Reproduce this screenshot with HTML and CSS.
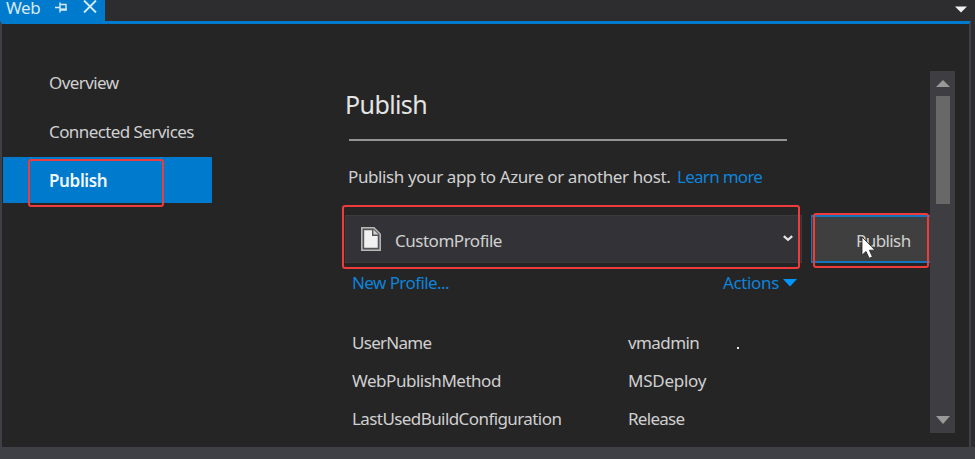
FILE: index.html
```html
<!DOCTYPE html>
<html lang="en">
<head>
<meta charset="utf-8">
<title>Web - Publish</title>
<link rel="stylesheet" href="styles.css">
</head>
<body>
<header class="tabs">
  <div class="tab">
    <span class="tab-name">Web</span>
    <svg class="pin" width="13" height="11" viewBox="0 0 13 11"><path d="M0 5.5H5M5 .5V10.5M5 2.5H11V8.2" fill="none" stroke="#d5eafa" stroke-width="1.4"/><path d="M5 7.6H11.7" stroke="#d5eafa" stroke-width="2.4"/></svg>
    <svg class="close" width="14" height="13" viewBox="0 0 14 13"><path d="M1 .5L13 12.5M13 .5L1 12.5" stroke="#d5eafa" stroke-width="1.9"/></svg>
  </div>
  <svg class="tab-menu" width="12" height="7" viewBox="0 0 12 7"><path d="M0 .5H12L6 6.5Z" fill="#f1f1f1"/></svg>
</header>
<main class="panel">
  <nav class="nav">
    <a class="nav-item"><span class="t-overview">Overview</span></a>
    <a class="nav-item"><span class="t-services">Connected Services</span></a>
    <a class="nav-item active"><span class="t-active">Publish</span><i class="mark mark-nav"></i></a>
  </nav>
  <section class="content">
    <h1><span>Publish</span></h1>
    <p class="intro"><span class="t-intro">Publish your app to Azure or another host.</span><a class="t-learn">Learn more</a></p>
    <div class="profile">
      <div class="combo">
        <svg class="file" width="20" height="24" viewBox="0 0 20 24"><path d="M.8.8H13L19.2 7V23.2H.8Z" fill="#555557" stroke="#b9b9b9" stroke-width="1.5"/><path d="M3.2 3.3H11V9H16.7V20.8H3.2Z" fill="#f1f1f1"/><path d="M12.4 2.5V7.6H17.5Z" fill="#d0d0d0"/></svg>
        <span class="t-profile">CustomProfile</span>
        <svg class="chevron" width="10" height="7" viewBox="0 0 10 7"><path d="M.8 1.2L5 4.9L9.2 1.2" fill="none" stroke="#e4e4e4" stroke-width="2.2"/></svg>
        <i class="mark mark-combo"></i>
      </div>
      <div class="button"><span class="t-button">Publish</span><i class="mark mark-button"></i>
        <svg class="cursor" width="16" height="24" viewBox="0 0 16 24"><path d="M1 1V19.2L5 15.4L8.2 22.3L11.4 20.8L8.4 14.2H14Z" fill="#fff" stroke="#222" stroke-width=".8"/></svg>
      </div>
    </div>
    <div class="links"><a class="t-new">New Profile...</a><a class="actions"><span class="t-actions">Actions</span><svg width="14" height="8" viewBox="0 0 14 8"><path d="M0 0H14L7 7.6Z" fill="#0097fb"/></svg></a></div>
    <dl class="settings">
      <dt><span class="t-user">UserName</span></dt><dd><span class="t-vm">vmadmin</span><i class="dot"></i></dd>
      <dt><span class="t-method">WebPublishMethod</span></dt><dd><span class="t-ms">MSDeploy</span></dd>
      <dt><span class="t-config">LastUsedBuildConfiguration</span></dt><dd><span class="t-release">Release</span></dd>
    </dl>
  </section>
  <aside class="scroll">
    <svg width="14" height="7" viewBox="0 0 14 7"><path d="M0 7L7 0L14 7Z" fill="#999"/></svg>
    <div class="thumb"></div>
    <svg class="down" width="14" height="8" viewBox="0 0 14 8"><path d="M0 0H14L7 8Z" fill="#999"/></svg>
  </aside>
</main>
<footer class="bottom"></footer>
</body>
</html>
```
FILE: styles.css
```css
* { box-sizing: border-box; }
body {
  margin: 0;
  width: 975px;
  height: 459px;
  overflow: hidden;
  display: flex;
  flex-direction: column;
  background: #2d2d30;
  color: #d0d0d0;
  font: 17px/24px "Noto Sans", "Open Sans", sans-serif;
  letter-spacing: -.35px;
  white-space: nowrap;
}
svg { display: block; flex: none; }
.tabs { height: 21px; display: flex; justify-content: space-between; }
.tab { width: 105px; height: 21px; background: #007acc; color: #d5eafa; display: flex; padding-left: 6px; }
.tab-name { width: 49px; line-height: 16px; }
.pin { margin-top: 2px; }
.close { margin: 0 0 0 15px; }
.tab-menu { margin: 6px 8px 0 0; }
.panel {
  width: 971px;
  height: 426px;
  background: #252526;
  border-left: 2px solid #3f3f46;
  border-right: 2px solid #3f3f46;
  border-top: 3px solid #007acc;
  display: flex;
}
.nav { width: 210px; padding: 36px 0 0 1px; display: flex; flex-direction: column; gap: 2.5px; }
.nav-item { height: 46px; padding-left: 46px; display: flex; align-items: center; position: relative; }
.t-overview, .t-services, .t-config, .t-vm, .t-button, .t-new { letter-spacing: -.58px; }
.t-user, .t-release, .t-learn { letter-spacing: -.72px; }
.t-method, .t-profile { letter-spacing: -.48px; }
.t-ms { letter-spacing: -.25px; }
.t-intro { letter-spacing: -.4px; }
.active { background: #007acc; color: #f1f7fc; font-weight: 600; padding-top: 2px; }
.mark { position: absolute; border: 2px solid #ee3b3b; border-radius: 3px; }
.mark-nav { left: 25px; top: 2px; width: 136px; height: 48px; }
.content { width: 586px; margin-left: 132px; padding-top: 61px; }
h1 { margin: 0 0 0 5px; width: 438px; height: 56px; border-bottom: 2px solid #949494; font-size: 25px; line-height: 38px; font-weight: 400; letter-spacing: -.6px; color: #e4e4e4; }
h1 span { margin-left: -4px; }
.intro { margin: 24px 0 0 4px; display: flex; height: 24px; }
.t-intro { width: 329px; }
.t-learn, .links { color: #0e83d8; }
.profile { display: flex; height: 48px; margin: 26px 0 0 1px; }
.combo { width: 457px; height: 48px; background: #333337; border: 1px solid #3b3b3e; display: flex; align-items: center; padding: 0 8px 0 15px; position: relative; }
.t-profile, .t-button { margin-top: 3px; }
.file { margin-right: 14px; }
.chevron { margin: -1px 0 0 auto; }
.mark-combo { left: -4px; top: -11px; width: 458px; height: 64px; }
.button { width: 119px; height: 48px; margin-left: 9px; background: #3f3f40; border: solid #1674bd; border-width: 2px 0 2px 1px; display: flex; align-items: center; padding-left: 44px; position: relative; }
.mark-button { left: 1px; top: -4px; width: 116px; height: 55px; }
.cursor { position: absolute; left: 49px; top: 19px; }
.links { display: flex; justify-content: space-between; width: 445px; margin: 8px 0 0 8px; }
.actions { display: flex; align-items: center; gap: 4px; }
.settings { display: grid; grid-template-columns: 276px auto; grid-auto-rows: 38px; align-items: center; margin: 29px 0 0 8px; }
dd { margin: 0; display: flex; }
.dot { width: 2px; height: 2px; margin: 16px 0 0 38px; background: #eee; }
.scroll { width: 25px; height: 362px; margin-top: 47px; padding: 9px 0; background: #3e3e42; display: flex; flex-direction: column; align-items: center; }
.thumb { width: 14px; height: 108px; margin-top: 9px; background: #686868; }
.down { margin-top: auto; }
.bottom { width: 975px; height: 12px; background: #3f3f46; }
```
